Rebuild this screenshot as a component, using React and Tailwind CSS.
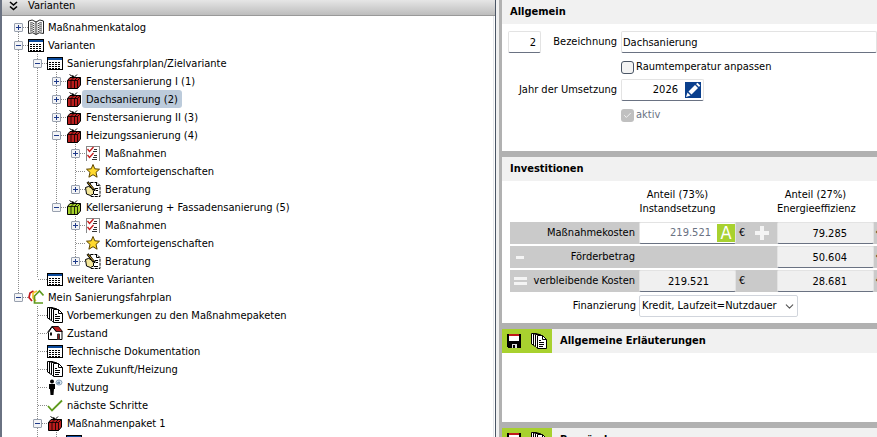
import { useState } from "react";
import clsx from "clsx";
import { Check, ChevronDown } from "lucide-react";

function TableIcon() {
  return (
    <svg width="16" height="16" viewBox="0 0 16 16" shapeRendering="crispEdges">
      <path d="M.5 2.500h15v12H.5z" fill="#fff" stroke="#000" />
      <path d="M1 3h14v2H1z" fill="#0a4a9c" />
      <path d="M2 7.500h12M2 9.500h12M2 11.500h12M2 13.500h12" stroke="#000" strokeDasharray="2 1" fill="none" />
    </svg>
  );
}

function BookIcon() {
  return (
    <svg width="16" height="16" viewBox="0 0 16 16">
      <path d="M.5 2Q4-.5 8 3q4-3.500 7.500-1v12.500Q11 12.500 8 15.500 5 12.500.5 14.500z" fill="#fff" stroke="#222" />
      <path d="M8 3v12" stroke="#222" />
      <path
        d="M2 4q2-1 4.500 1M2 6q2-1 4.500 1M2 8q2-1 4.500 1M2 10q2-1 4.500 1M2 12q2-1 4.500 1M14 4q-2-1-4.500 1M14 6q-2-1-4.500 1M14 8q-2-1-4.500 1M14 10q-2-1-4.500 1M14 12q-2-1-4.500 1"
        stroke="#444"
        fill="none"
      />
    </svg>
  );
}

function PackageIcon({ color = "#b91c1c" }) {
  return (
    <svg width="16" height="16" viewBox="0 0 16 16">
      <path d="M1.500 7.500 4 4.500h10.500V12l-3 3.500h-10z" fill={color} stroke="#000" />
      <path d="M1.500 7.500h10v8M11.500 7.500l3-3M5 7.500v8M8.500 7.500v8M5 7.500l3-3M8.500 7.500l3-3" stroke="#000" strokeWidth=".8" fill="none" />
      <path d="M8 4.500 3.500 1.500M8 4.500 6.500 2M8 4.500l3-3" stroke="#000" fill="none" />
    </svg>
  );
}

function ChecklistIcon() {
  return (
    <svg width="16" height="16" viewBox="0 0 16 16">
      <path d="M1.500 15.500V1.500h13v14" fill="#fff" stroke="#888" shapeRendering="crispEdges" />
      <path d="M2.500 4l2 2.500 4-4.500M2.500 10l2 2.500 4-4.500" stroke="#c81e1e" strokeWidth="1.300" fill="none" />
      <path d="M9 4.500h3M8 6.500h4M9 10.500h3M8 12.500h4M7 14.500h5" stroke="#333" shapeRendering="crispEdges" />
    </svg>
  );
}

function StarIcon() {
  return (
    <svg width="16" height="16" viewBox="0 0 16 16">
      <path d="M8 1.500l1.800 4.300 4.700.4-3.500 3.200 1.100 4.800L8 11.700l-4.100 2.500L5 9.400 1.500 6.200l4.700-.4z" fill="#ffd92e" stroke="#5c4400" />
    </svg>
  );
}

function AdviceIcon() {
  return (
    <svg width="16" height="16" viewBox="0 0 16 16">
      <path d="M5.500 1.500H12l3 3v11H5.500z" fill="#fff" stroke="#000" strokeDasharray="3 1" />
      <path d="M11.500 1.500v3h3M10 7.500h3M11 9.500h2M9 13.500h4" stroke="#000" fill="none" />
      <path d="M.5 6.500l3-1 5 2 2 1.500-2 1v3l-3 1.500-4-1.500z" fill="#f4e79a" stroke="#000" />
      <path d="M2.500 1l6.500 8" stroke="#000" strokeWidth="2.500" />
      <path d="M3 1.500l5.500 6.500" stroke="#c79a20" />
    </svg>
  );
}

function HousesIcon() {
  return (
    <svg width="16" height="16" viewBox="0 0 16 16" fill="none" strokeWidth="1.700">
      <path d="M5.500 2 2 4 1 8.500 4 12" stroke="#c0181c" />
      <path d="M9 2 5 4v5l3 3" stroke="#f6c12c" />
      <path d="M15.500 6.500 11.500 2 6.500 7v7H15" stroke="#5f9a1e" />
    </svg>
  );
}

function DocsIcon() {
  return (
    <svg width="16" height="16" viewBox="0 0 16 16">
      <path d="M.5.5h5v12l-3-.5-2-1z" fill="#fff" stroke="#000" />
      <path d="M2.500 1h5v12.500h-3l-2-1z" fill="#fff" stroke="#000" />
      <path d="M4.500 1.500h5v13h-4l-1-1z" fill="#fff" stroke="#000" />
      <path d="M6.500 2.500h5l4 4v9h-9z" fill="#fff" stroke="#000" />
      <path d="M11.500 2.500v4h4M8 7.500h2M8 9.500h5M8 11.500h5M8 13.500h4" stroke="#000" fill="none" />
    </svg>
  );
}

function HouseIcon() {
  return (
    <svg width="16" height="16" viewBox="0 0 16 16">
      <path d="M1.500 7.500v7h13.500V7L11 2H5z" fill="#fff" stroke="#000" />
      <path d="M5 1.500h6.500l4 5h-6z" fill="#b91c1c" stroke="#000" strokeWidth=".8" />
      <path d="M.5 7.500 5 1.500 9.500 7" stroke="#000" fill="none" />
      <path d="M3 7.500h2v3H3z" fill="#111" />
      <path d="M10.500 9h2v5.500h-2z" fill="#8b1a1a" stroke="#333" />
    </svg>
  );
}

function PersonIcon() {
  return (
    <svg width="16" height="16" viewBox="0 0 16 16">
      <circle cx="5" cy="2.500" r="2" />
      <path d="M2 5h6v5H7l-.5 6h-3L3 10H2z" />
      <ellipse cx="12" cy="3.500" rx="3" ry="2.500" fill="#d7e6f2" stroke="#8ba3b8" />
      <path d="M10 4h3M12 2.500v2" stroke="#4a6a8c" />
    </svg>
  );
}

function TickIcon() {
  return (
    <svg width="16" height="16" viewBox="0 0 16 16">
      <path d="M1 9l4 4.500L15 3.500" stroke="#5f9a1e" strokeWidth="1.800" fill="none" />
    </svg>
  );
}

function SaveIcon() {
  return (
    <svg width="14" height="14" viewBox="0 0 14 14" shapeRendering="crispEdges">
      <path d="M0 0h14v14H1l-1-1z" />
      <path d="M2 0h10v2H2z" fill="#c0181c" />
      <path d="M2 2h10v5H2z" fill="#fff" />
      <path d="M5 10h5v4H5z" fill="#ddd" />
      <path d="M6 11h2v3H6z" />
    </svg>
  );
}

function PencilIcon() {
  return (
    <svg width="16" height="16" viewBox="0 0 16 16" fill="#fff">
      <path d="M3.500 9.500 10 3l3 3-6.500 6.500z" />
      <path d="M11 2 12.500.8l2.700 2.700L14 5zM2.500 10.500 5.500 13.500 1 15z" />
    </svg>
  );
}

function DoubleChevronIcon() {
  return (
    <svg width="9" height="10" viewBox="0 0 9 10" fill="none" stroke="#000" strokeWidth="1.600">
      <path d="M1 1l3.500 3L8 1M1 5.500l3.500 3 3.500-3" />
    </svg>
  );
}

const packageChildren = [
  { label: "Maßnahmen", icon: <ChecklistIcon />, closed: true },
  { label: "Komforteigenschaften", icon: <StarIcon /> },
  { label: "Beratung", icon: <AdviceIcon />, closed: true },
];

const tree = [
  { label: "Maßnahmenkatalog", icon: <BookIcon />, closed: true },
  {
    label: "Varianten",
    icon: <TableIcon />,
    children: [
      {
        label: "Sanierungsfahrplan/Zielvariante",
        icon: <TableIcon />,
        children: [
          { label: "Fenstersanierung I (1)", icon: <PackageIcon />, closed: true },
          { label: "Dachsanierung (2)", icon: <PackageIcon />, closed: true },
          { label: "Fenstersanierung II (3)", icon: <PackageIcon />, closed: true },
          { label: "Heizungssanierung (4)", icon: <PackageIcon />, children: packageChildren },
          {
            label: "Kellersanierung + Fassadensanierung (5)",
            icon: <PackageIcon color="#a4d02a" />,
            children: packageChildren,
          },
        ],
      },
      { label: "weitere Varianten", icon: <TableIcon /> },
    ],
  },
  {
    label: "Mein Sanierungsfahrplan",
    icon: <HousesIcon />,
    children: [
      { label: "Vorbemerkungen zu den Maßnahmepaketen", icon: <DocsIcon /> },
      { label: "Zustand", icon: <HouseIcon /> },
      { label: "Technische Dokumentation", icon: <TableIcon /> },
      { label: "Texte Zukunft/Heizung", icon: <DocsIcon /> },
      { label: "Nutzung", icon: <PersonIcon /> },
      { label: "nächste Schritte", icon: <TickIcon /> },
      {
        label: "Maßnahmenpaket 1",
        icon: <PackageIcon />,
        children: [{ label: "Sanierungsfahrplan/Zielvariante", icon: <TableIcon /> }],
      },
      { label: "Maßnahmenpaket 2", icon: <PackageIcon />, closed: true },
    ],
  },
];

function Guide({ className }) {
  return (
    <span className={clsx("w-px bg-[repeating-linear-gradient(#8c8c8c_0_1px,transparent_1px_2px)]", className)} />
  );
}

function TreeNode({ node, guides, first, last, selected, onSelect }) {
  const [open, setOpen] = useState(!node.closed);
  const expandable = node.closed || node.children;

  return (
    <li role="treeitem" aria-expanded={expandable ? open : undefined}>
      <div className="flex h-[18px] items-center">
        {guides.map((line, i) => (
          <span key={i} className="flex h-full w-[19px] shrink-0 justify-center">
            {line && <Guide />}
          </span>
        ))}
        <span className="grid h-full w-[19px] shrink-0 place-items-center">
          <span className="col-start-1 row-start-1 flex h-full flex-col">
            <Guide className={clsx("h-2", first && "invisible")} />
            <Guide className={clsx("h-2.5", last && "invisible")} />
          </span>
          <span className="col-start-1 row-start-1 ml-auto h-px w-[9px] bg-[repeating-linear-gradient(90deg,#8c8c8c_0_1px,transparent_1px_2px)]" />
          {expandable && (
            <button
              type="button"
              aria-label={node.label}
              onClick={() => setOpen(!open)}
              className="z-10 col-start-1 row-start-1 flex size-[9px] items-center justify-center rounded-[1px] border border-gray-400 bg-gray-100"
            >
              <svg width="5" height="5" viewBox="0 0 5 5" shapeRendering="crispEdges" stroke="#1e3a8a">
                <path d={node.closed ? "M0 2.500h5M2.500 0v5" : "M0 2.500h5"} />
              </svg>
            </button>
          )}
        </span>
        <span className="flex w-4 shrink-0">{node.icon}</span>
        <button
          type="button"
          onClick={() => onSelect(node.label)}
          className={clsx("h-[18px] rounded-[3px] px-1 pt-px", selected === node.label && "bg-[#bccbdb]")}
        >
          {node.label}
        </button>
      </div>
      {open && node.children && (
        <TreeList nodes={node.children} guides={[...guides, !last]} selected={selected} onSelect={onSelect} />
      )}
    </li>
  );
}

function TreeList({ nodes, guides = [], ...rest }) {
  return (
    <ul role={guides.length ? "group" : "tree"}>
      {nodes.map((node, i) => (
        <TreeNode
          key={node.label}
          node={node}
          guides={guides}
          first={i === 0 && guides.length === 0}
          last={i === nodes.length - 1}
          {...rest}
        />
      ))}
    </ul>
  );
}

function Section({ title, tools, className, children }) {
  return (
    <section className="bg-white">
      <header className="flex h-6 items-center bg-[#f1f1f1]">
        {tools && (
          <div className="flex h-full w-[50px] items-center justify-between bg-[#a8d12f] px-[5px]">
            <button type="button" aria-label="Speichern">
              <SaveIcon />
            </button>
            <button type="button" aria-label="Textbausteine">
              <DocsIcon />
            </button>
          </div>
        )}
        <h2 className="px-2 font-bold">{title}</h2>
      </header>
      <div className={className}>{children}</div>
    </section>
  );
}

const field = "h-[22px] rounded-[2px] border border-[#e3e3e3] border-b-gray-500 outline-none";

function Amount({ label, value }) {
  return (
    <input aria-label={label} readOnly defaultValue={value} className={clsx(field, "block w-full bg-[#f0f0f0] pr-[26px] text-right")} />
  );
}

function GeneralSection() {
  return (
    <Section title="Allgemein" className="h-[127px] pt-[7px]">
      <div className="grid grid-cols-[115px_1fr] gap-x-1">
        <div className="flex items-center justify-between pl-1.5">
          <input aria-label="Nummer" defaultValue="2" className={clsx(field, "w-[33px] pr-1 text-right")} />
          <label htmlFor="name">Bezeichnung</label>
        </div>
        <input id="name" defaultValue="Dachsanierung" className={clsx(field, "min-w-0 px-px")} />

        <label className="col-start-2 flex h-[26px] items-center gap-0.5 pt-0.5">
          <input type="checkbox" className="size-[13px] appearance-none rounded-[3px] border border-gray-600 bg-[#f3f3f3]" />
          Raumtemperatur anpassen
        </label>

        <label htmlFor="year" className="self-center text-right">
          Jahr der Umsetzung
        </label>
        <div className={clsx(field, "flex w-[83px] items-center justify-between pr-0.5")}>
          <input id="year" defaultValue="2026" className="w-14 text-right outline-none" />
          <button type="button" aria-label="Jahr bearbeiten" className="bg-[#0a3f8c]">
            <PencilIcon />
          </button>
        </div>

        <label className="col-start-2 flex h-7 items-center gap-0.5 text-gray-500">
          <span className="grid size-[13px] place-items-center rounded-[3px] bg-[#c0c0c0]">
            <input type="checkbox" defaultChecked disabled className="col-start-1 row-start-1 size-[13px] appearance-none" />
            <Check size={9} color="#fff" className="col-start-1 row-start-1" />
          </span>
          aktiv
        </label>
      </div>
    </Section>
  );
}

function InvestSection() {
  return (
    <Section title="Investitionen" className="h-[142px] pt-[5px] pl-2">
      <table className="w-full table-fixed border-separate border-spacing-x-0 border-spacing-y-0.5">
        <colgroup>
          <col className="w-5" />
          <col className="w-[109px]" />
          <col className="w-[97px]" />
          <col className="w-[41px]" />
          <col className="w-[97px]" />
          <col />
        </colgroup>
        <thead>
          <tr className="h-8 align-top leading-[14px]">
            <td colSpan={2} />
            <th className="pr-5 font-normal">
              Anteil (73%)
              <br />
              Instandsetzung
            </th>
            <td />
            <th className="pr-5 font-normal">
              Anteil (27%)
              <br />
              Energieeffizienz
            </th>
            <td />
          </tr>
        </thead>
        <tbody className="[&>tr]:h-[22px] [&>tr]:bg-[#cacaca] [&_td]:p-0 [&_th]:py-0">
          <tr>
            <td />
            <th className="pr-1 text-right font-normal">Maßnahmekosten</th>
            <td>
              <div className={clsx(field, "flex items-center justify-end bg-white")}>
                <input aria-label="Maßnahmekosten Instandsetzung" defaultValue="219.521" className="w-full text-right text-gray-500 outline-none" />
                <button type="button" className="ml-1.5 size-[18px] shrink-0 bg-[#a8d12f] text-lg leading-[18px] text-white">
                  A
                </button>
              </div>
            </td>
            <td>
              <div className="flex items-center gap-2.5 pl-[3px]">
                €
                <svg width="14" height="14" viewBox="0 0 14 14" shapeRendering="crispEdges">
                  <path d="M5 0h4v5h5v4H9v5H5V9H0V5h5z" fill="#f4f4f4" />
                </svg>
              </div>
            </td>
            <td>
              <Amount label="Maßnahmekosten Energieeffizienz" value="79.285" />
            </td>
            <td>
              <span className="pl-0.5">€</span>
            </td>
          </tr>
          <tr>
            <td>
              <svg className="mx-auto" width="8" height="3">
                <path d="M0 0h8v3H0z" fill="#f4f4f4" />
              </svg>
            </td>
            <th className="pr-1 text-right font-normal">Förderbetrag</th>
            <td />
            <td />
            <td>
              <Amount label="Förderbetrag Energieeffizienz" value="50.604" />
            </td>
            <td>
              <span className="pl-0.5">€</span>
            </td>
          </tr>
          <tr>
            <td>
              <svg className="mx-auto" width="13" height="8">
                <path d="M0 0h13v3H0zM0 5h13v3H0z" fill="#f4f4f4" />
              </svg>
            </td>
            <th className="pr-1 text-right font-normal">verbleibende Kosten</th>
            <td>
              <Amount label="Verbleibende Kosten Instandsetzung" value="219.521" />
            </td>
            <td>
              <span className="pl-[3px]">€</span>
            </td>
            <td>
              <Amount label="Verbleibende Kosten Energieeffizienz" value="28.681" />
            </td>
            <td>
              <span className="pl-0.5">€</span>
            </td>
          </tr>
        </tbody>
      </table>
      <div className="flex items-center pt-px">
        <label htmlFor="finance" className="w-[129px] pr-[3px] text-right">
          Finanzierung
        </label>
        <div className="grid w-[159px] items-center">
          <select
            id="finance"
            className="col-start-1 row-start-1 h-[22px] appearance-none rounded-[2px] border border-gray-300 bg-white pl-0.5"
          >
            <option>Kredit, Laufzeit=Nutzdauer</option>
          </select>
          <ChevronDown size={13} strokeWidth={2} color="#555" className="pointer-events-none col-start-1 row-start-1 mr-0.5 justify-self-end" />
        </div>
      </div>
    </Section>
  );
}

export default function App() {
  const [selected, setSelected] = useState("Dachsanierung (2)");

  return (
    <div className="flex h-screen overflow-hidden bg-[#f0f0f0] font-['DejaVu_Sans_Condensed','DejaVu_Sans',sans-serif] text-[11px] leading-4 whitespace-nowrap text-black">
      <aside className="flex w-[496px] shrink-0 flex-col border-r border-l-2 border-r-gray-600 border-l-gray-500 bg-white">
        <div className="flex h-4 shrink-0 items-center border-b border-[#999] bg-linear-to-b from-[#e6e6e6] to-[#bdbdbd] pb-1 pl-[7px]">
          <DoubleChevronIcon />
          <h1 className="pl-2.5">Varianten</h1>
        </div>
        <div className="mr-px min-h-0 grow overflow-hidden border-r border-gray-200 pt-0.5 pl-[7px]">
          <TreeList nodes={tree} selected={selected} onSelect={setSelected} />
        </div>
      </aside>
      <main className="ml-[3px] flex min-w-0 grow flex-col gap-1.5 overflow-hidden bg-[#b1b1b1] pl-[3px]">
        <GeneralSection />
        <InvestSection />
        <Section title="Allgemeine Erläuterungen" tools className="h-[69px]" />
        <Section title="Begründung" tools className="h-[69px]" />
      </main>
    </div>
  );
}
